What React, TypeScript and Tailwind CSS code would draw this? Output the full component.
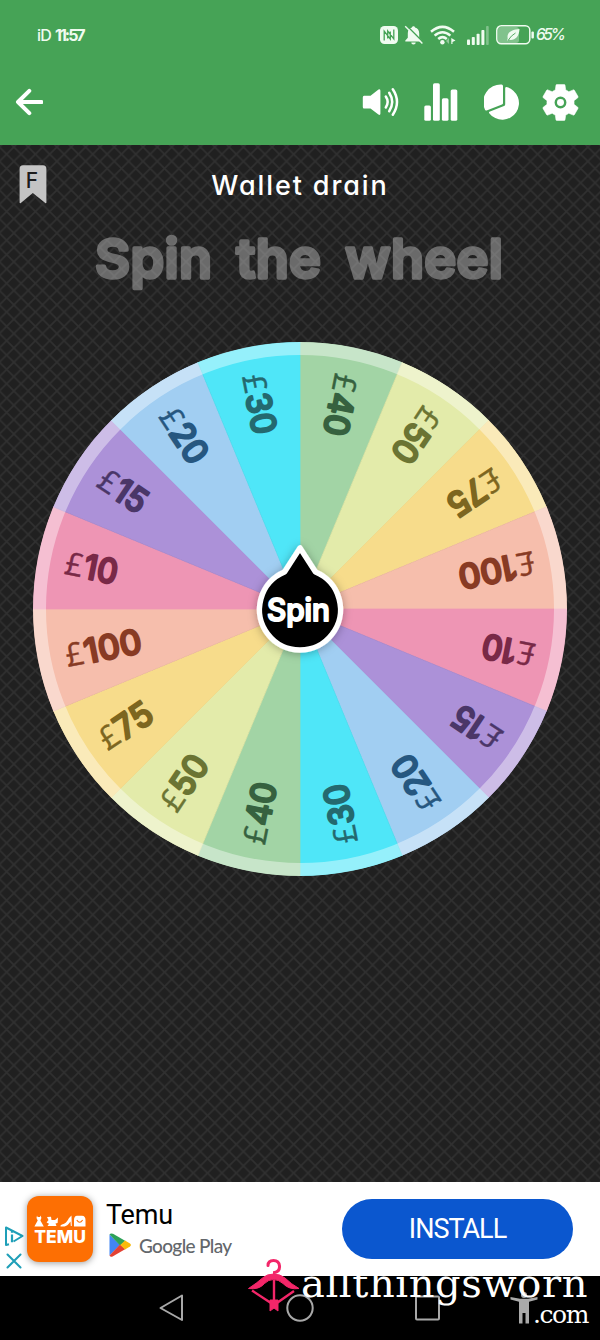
import { ReactNode } from "react"

const slices = [
  { value: "40", fill: "#a2d4a5", text: "#36613f", width: 43 },
  { value: "50", fill: "#e3ebaa", text: "#6b7433", width: 41 },
  { value: "75", fill: "#f7dc8b", text: "#7d6620", width: 39 },
  { value: "100", fill: "#f6beac", text: "#883b24", width: 58 },
  { value: "10", fill: "#ee95b4", text: "#792947", width: 34 },
  { value: "15", fill: "#ac91d8", text: "#4a3668", width: 33 },
  { value: "20", fill: "#a1cef2", text: "#265780", width: 41 },
  { value: "30", fill: "#4fe6f8", text: "#24696f", width: 41 },
]

// the same eight prizes go round twice
const wheel = [...slices, ...slices]
const STEP = 360 / wheel.length
const R = 267

function point(deg: number, r: number) {
  const a = (deg * Math.PI) / 180
  return `${(r * Math.sin(a)).toFixed(2)} ${(-r * Math.cos(a)).toFixed(2)}`
}

function Wheel() {
  return (
    <svg viewBox="-267 -267 534 534" className="block h-[534px] w-[534px]">
      <defs>
        <filter id="hub-shadow" x="-50%" y="-50%" width="200%" height="200%">
          <feDropShadow dx="0" dy="1" stdDeviation="5" floodColor="#000" floodOpacity="0.3" />
        </filter>
        <clipPath id="disc">
          <circle r={R} />
        </clipPath>
      </defs>
      <g clipPath="url(#disc)">
        {wheel.map((s, i) => (
          <path
            key={i}
            d={`M0 0L${point(i * STEP, R)}A${R} ${R} 0 0 1 ${point((i + 1) * STEP, R)}Z`}
            fill={s.fill}
            stroke={s.fill}
            strokeWidth="0.7"
          />
        ))}
      </g>
      {/* lighter rim */}
      <circle r="260.5" fill="none" stroke="#fff" strokeOpacity="0.4" strokeWidth="13" />
      {wheel.map((s, i) => (
        <g key={i} transform={`rotate(${(i + 0.5) * STEP + 90})`} fill={s.text}>
          <text
            x="-239"
            y="11.5"
            fontSize="32"
            textLength="18"
            lengthAdjust="spacingAndGlyphs"
            stroke={s.text}
            strokeWidth="0.4"
            className="font-['Open_Sans',sans-serif]"
          >
            £
          </text>
          <text
            x="-220"
            y="12"
            fontSize="34"
            textLength={s.width}
            lengthAdjust="spacingAndGlyphs"
            stroke={s.text}
            strokeWidth="2.2"
            strokeLinejoin="round"
            className="font-['Inter',sans-serif] font-medium"
          >
            {s.value}
          </text>
        </g>
      ))}
      <path
        d="M0 -61L-15.5 -37A40.5 40.5 0 1 0 15.5 -37Z"
        fill="#000"
        stroke="#fff"
        strokeWidth="5.5"
        strokeLinejoin="round"
        filter="url(#hub-shadow)"
      />
      <text
        x="-33"
        y="11.5"
        fontSize="31"
        textLength="63"
        lengthAdjust="spacingAndGlyphs"
        fill="#fff"
        stroke="#fff"
        strokeWidth="2"
        strokeLinejoin="round"
        className="font-['Inter',sans-serif] font-medium"
      >
        Spin
      </text>
    </svg>
  )
}

function Pattern() {
  return (
    <svg className="absolute inset-0 h-full w-full">
      <defs>
        <pattern id="mesh" width="14.35" height="14.35" patternUnits="userSpaceOnUse" x="-0.5" y="2">
          <path
            d="M-2 -2L16.35 16.35M16.35 -2L-2 16.35"
            stroke="#303030"
            strokeWidth="1.6"
          />
        </pattern>
      </defs>
      <rect width="100%" height="100%" fill="#202020" />
      <rect width="100%" height="100%" fill="url(#mesh)" />
    </svg>
  )
}

function StatusBar() {
  return (
    <div className="flex h-[69px] items-center justify-between pr-9 pl-[37px] text-[#f0fbf0]">
      <div className="flex gap-1 font-['Inter',sans-serif] text-[16px] leading-5 font-medium tracking-[-0.8px]">
        <span>iD</span>
        <span className="font-bold tracking-[-2px]">11:57</span>
      </div>
      <div className="flex items-center">
        <svg viewBox="0 0 18 18" className="h-[18px] w-[18px]">
          <rect width="18" height="18" rx="4.5" fill="currentColor" />
          <path d="M4.2 14.5V5.2L10.3 13V5.5M13.8 3.5v9.3L7.7 5v7.5" fill="none" stroke="#46a356" strokeWidth="1.3" />
        </svg>
        <svg viewBox="0 0 20 20" className="ml-[6px] h-5 w-5">
          <path
            d="M9.5 1.2c.9 0 1.5.6 1.5 1.4 2.7.7 4.2 3 4.2 5.6v4.6l2.6 2.7v1H1.3v-1l2.5-2.7V8.2c0-2.6 1.5-4.9 4.2-5.6 0-.8.6-1.4 1.5-1.4zM7.3 17.4h4.4c0 1.2-.9 2-2.2 2s-2.2-.8-2.2-2z"
            fill="currentColor"
          />
          <path d="M2.8 .8L19.6 17.6" stroke="#46a356" strokeWidth="1.5" />
          <path d="M1.2 1.2L18.4 18.4" stroke="currentColor" strokeWidth="1.4" />
        </svg>
        <svg viewBox="0 0 26 20" className="ml-[6px] h-5 w-[26px]">
          <g fill="none" stroke="currentColor" strokeWidth="2.5">
            <path d="M1 6.8Q12.5 -3 24 6.8" />
            <path d="M4.6 10.6Q12.5 3.8 20.4 10.6" />
            <path d="M8.2 14Q12.5 10.2 16.8 14" />
          </g>
          <circle cx="12.4" cy="17.3" r="2.2" fill="currentColor" />
          <path d="M19 13v6l-3-3z" fill="currentColor" opacity=".45" />
          <path d="M21.3 13v6h1.2v-2l3-1.5z" fill="currentColor" />
        </svg>
        <svg viewBox="0 0 23 20" className="ml-[10px] h-5 w-[23px]" fill="currentColor">
          <rect x="1" y="14.5" width="3" height="5.5" rx=".8" />
          <rect x="5.8" y="12" width="3" height="8" rx=".8" />
          <rect x="10.6" y="8.7" width="3" height="11.3" rx=".8" />
          <rect x="15.4" y="5" width="3" height="15" rx=".8" />
          <rect x="20.1" y="1" width="2.6" height="19" rx=".8" opacity=".35" />
        </svg>
        <svg viewBox="0 0 39 20" className="ml-[7px] h-5 w-[39px]">
          <rect x="2" y="2" width="21" height="16" rx="3" fill="currentColor" opacity=".35" />
          <rect x=".8" y=".8" width="33" height="18" rx="4.5" fill="none" stroke="currentColor" strokeWidth="1.5" />
          <rect x="35.4" y="6.5" width="2.5" height="7" rx="1" fill="currentColor" />
          <path d="M23.5 4C15 4.5 10.5 8 11.7 13.5L11 16l1.8-1.2C19 15.7 23 12 23.5 4z" fill="currentColor" />
          <path d="M12 15.5Q15 10.5 19.5 8" fill="none" stroke="#46a356" strokeWidth=".9" />
        </svg>
        <span className="ml-px w-7 font-['Inter',sans-serif] text-[15.5px] leading-5 font-medium tracking-[-2.4px] italic">65%</span>
      </div>
    </div>
  )
}

function Toolbar() {
  return (
    <div className="flex h-[66px] items-center justify-between pr-[21px] pl-[15px] text-white">
      <svg viewBox="0 0 28 28" className="h-7 w-7" fill="none" stroke="currentColor" strokeWidth="4" strokeLinecap="round" strokeLinejoin="round">
        <path d="M14.3 2.8L3 14L14.3 25.2M3 14H26.5" />
      </svg>
      <div className="flex items-center">
        <svg viewBox="0 0 37 30" className="h-[30px] w-[37px]">
          <path d="M2 8.8h6.5L16.5 2.6Q18.4 1.5 18.4 3.8v22.8q0 2.2-2 1L8.5 21.5H2Q.8 21.5.8 20V10.4Q.8 8.8 2 8.8z" fill="currentColor" />
          <g fill="none" stroke="currentColor" strokeWidth="2.5" strokeLinecap="round">
            <path d="M23.8 9.5Q27.5 15 23.8 20.5" />
            <path d="M27.2 5.8Q33.2 15 27.2 24.2" />
            <path d="M30.8 2.3Q39.2 15 30.8 27.7" />
          </g>
        </svg>
        <svg viewBox="0 0 34 38" className="ml-[25px] h-[38px] w-[34px]" fill="currentColor">
          <rect x=".3" y="22.5" width="6.6" height="15.3" rx="1.6" />
          <rect x="9" y="0.3" width="6.8" height="37.5" rx="1.6" />
          <rect x="17.9" y="15.3" width="6.6" height="22.5" rx="1.6" />
          <rect x="26.7" y="6.5" width="6.6" height="31.3" rx="1.6" />
        </svg>
        <svg viewBox="0 0 36 36" className="ml-[26px] h-9 w-9" fill="currentColor">
          <path d="M17.6 .5Q19 .5 19 2V19.2Q19 20 18 20.5L2.6 26.4Q1.2 26.8 .8 25.2A17.5 17.5 0 0 1 17.6 .5z" />
          <path d="M22.4 3Q21.2 3 21.2 4.2V20.2Q21.2 21.6 20 22.1L5.4 27.8Q4.6 28.4 5.2 29.2A16.6 16.6 0 1 0 22.4 3z" />
        </svg>
        <svg viewBox="2.2 2.2 19.6 19.6" className="ml-[22px] h-[37px] w-[37px]">
          <path
            fill="currentColor"
            stroke="currentColor"
            strokeWidth=".3"
            d="M19.14 12.94c.04-.3.06-.61.06-.94 0-.32-.02-.64-.07-.94l2.03-1.58c.18-.14.23-.41.12-.61l-1.92-3.32c-.12-.22-.37-.29-.59-.22l-2.39.96c-.5-.38-1.03-.7-1.62-.94l-.36-2.54c-.04-.24-.24-.41-.48-.41h-3.84c-.24 0-.43.17-.47.41l-.36 2.54c-.59.24-1.13.57-1.62.94l-2.39-.96c-.22-.08-.47 0-.59.22L2.74 8.87c-.12.21-.08.47.12.61l2.03 1.58c-.05.3-.09.63-.09.94s.02.64.07.94l-2.03 1.58c-.18.14-.23.41-.12.61l1.92 3.32c.12.22.37.29.59.22l2.39-.96c.5.38 1.03.7 1.62.94l.36 2.54c.05.24.24.41.48.41h3.84c.24 0 .44-.17.47-.41l.36-2.54c.59-.24 1.13-.56 1.62-.94l2.39.96c.22.08.47 0 .59-.22l1.92-3.32c.12-.22.07-.47-.12-.61l-2.01-1.58z"
          />
          <circle cx="12" cy="12" r="2.5" fill="none" stroke="#46a356" strokeWidth="1.3" />
        </svg>
      </div>
    </div>
  )
}

function Bookmark({ children }: { children: ReactNode }) {
  return (
    <div className="grid h-[39px] w-7">
      <svg viewBox="0 0 28 39" className="col-start-1 row-start-1 h-[39px] w-7">
        <path d="M4 .3H24Q27.4 .3 27.4 4V37.5Q27.4 38.8 26.3 38L13.8 28 1.8 38Q.6 38.8.6 37.5V4Q.6 .3 4 .3z" fill="#c4c4c4" />
      </svg>
      <span className="col-start-1 row-start-1 pt-1 pr-0.5 text-center font-['Inter',sans-serif] text-[21px] leading-6 font-medium text-[#1c1c1c]">
        {children}
      </span>
    </div>
  )
}

function Ad() {
  return (
    <div className="flex h-[94px] bg-white">
      <div className="flex w-[27px] flex-col items-center gap-1 pt-[43px]">
        <svg viewBox="0 0 20 22" className="h-[22px] w-5" fill="none" stroke="#1f9fb8" strokeWidth="2" strokeLinejoin="round">
          <path d="M5 19.2L2 20V2.5L18.5 11L9.5 16.5" />
          <path d="M8 9.5V17.2M8 5.6V7.8" strokeWidth="2.2" />
        </svg>
        <svg viewBox="0 0 16 16" className="mt-0.5 h-4 w-4" stroke="#1f9fb8" strokeWidth="2.1" strokeLinecap="round">
          <path d="M1.5 1.5l13 13M14.5 1.5l-13 13" />
        </svg>
      </div>
      <div className="mt-[14px] flex h-[66px] w-[66px] flex-col items-center rounded-xl bg-[#fd6f03] pt-[19px] shadow-[0_1px_7px_rgba(0,0,0,0.4)]">
        <svg viewBox="0 0 52 12" className="h-3 w-[52px]" fill="#fff">
          <path d="M3 .5L3.6 2H6L6.7 .5 7.4 3 6.4 5.5 9.8 11.5H.4L3.7 5.5 2.5 3z" />
          <path d="M13 2L17 1.8 17.5 5H21L24 2.5 23.6 8 21.5 8.5 22.5 11H13.5L15 8.8 12.6 7.5 14.5 5z" />
          <path d="M37.5 .5L37.8 11H36.8L36.5 6.5Q33 11.4 30.5 11.4H26.5Q26 10 28 9.5 32.5 8.5 35 3z" />
          <path d="M43 .8H48Q51.5 1 51.5 5V11.5H40V5Q40 1 43 .8z" />
          <path d="M42.8 5Q45.7 9.5 48.6 5" stroke="#fd6f03" strokeWidth="1.1" fill="none" />
        </svg>
        <span className="mt-px font-['Inter',sans-serif] text-[17.5px] leading-[18px] font-extrabold text-white">TEMU</span>
      </div>
      <div className="w-[249px] pt-[17px] pl-[13px]">
        <div className="font-['Roboto',sans-serif] text-[27px] leading-8 tracking-[-0.2px] text-black">Temu</div>
        <div className="flex items-center gap-[8px] pl-[3px]">
          <svg viewBox="0 0 22 24" className="mt-px h-6 w-[22px]">
            <path d="M.5 1.5V22.5L11 12z" fill="#4285f4" />
            <path d="M.5 1.5Q1.5-.3 4 .8L16.5 8 11 12.5z" fill="#2da158" />
            <path d="M.5 22.5Q1.5 24.5 4 23.2L16.5 16 11 11.5z" fill="#e34133" />
            <path d="M16 7.6L21 10.4Q22.8 12 21 13.6L16 16.4 11.3 12z" fill="#f9ba0b" />
          </svg>
          <span className="mt-[3px] font-['Lato',sans-serif] text-[19px] leading-6 font-medium tracking-[-0.65px] text-[#63676b]">
            Google Play
          </span>
        </div>
      </div>
      <button className="mt-[17px] h-15 w-[231px] rounded-full bg-[#0b57cf] font-['Roboto',sans-serif] text-[27px] tracking-[-1px] text-white">
        INSTALL
      </button>
    </div>
  )
}

function NavBar() {
  return (
    <div className="flex h-16 items-center bg-black pl-[159px]">
      <svg viewBox="0 0 26 28" className="h-7 w-[26px]" fill="none" stroke="#a8a8a8" strokeWidth="2" strokeLinejoin="round">
        <path d="M23 1.5V26L1.5 14z" />
      </svg>
      <svg viewBox="0 0 28 28" className="ml-[101px] h-7 w-7" fill="none" stroke="#a8a8a8" strokeWidth="2">
        <circle cx="14" cy="14" r="12.7" />
      </svg>
      <svg viewBox="0 0 26 26" className="ml-[100px] h-[26px] w-[26px]" fill="none" stroke="#a8a8a8" strokeWidth="2">
        <rect x="2" y="1.5" width="23" height="23" rx="1" />
      </svg>
      <svg viewBox="0 0 28 32" className="ml-[70px] h-8 w-7" fill="#aaa">
        <circle cx="14" cy="3" r="3" />
        <path d="M.5 5L10 6.8H18L27.5 5V7.6L19 9.8V31.5H15.5V21H12.5V31.5H9V9.8L.5 7.6z" />
      </svg>
    </div>
  )
}

function Watermark() {
  return (
    <div className="absolute top-[1257px] right-[12px] flex items-start">
      <svg viewBox="0 0 54 56" className="h-14 w-[54px]" fill="none" stroke="#f32669" strokeWidth="3">
        <path d="M21 8.5Q21 3.5 26.5 3.5T32.5 9 27.5 15.5V19" strokeLinecap="round" />
        <path d="M1.5 31.5Q10 26 15.5 21 20 17 26.5 17T38 21Q44 27 52 31.5 42 33 36 26.5 31.5 22.5 26.5 22.5T17.5 26.5Q12 33 1.5 31.5z" fill="#f32669" strokeWidth="1" />
        <path d="M5 33.5L27 48 47 34M27 23V47" strokeWidth="2.4" />
        <path d="M23 43H31V54L27 51 23 54z" fill="#f32669" strokeWidth="1" />
      </svg>
      <div className="flex w-[287px] flex-col items-end font-['DejaVu_Serif',serif] text-white">
        <span className="mt-1 text-[40px] leading-[44px] tracking-[0.6px] whitespace-nowrap">allthingsworn</span>
        <span className="-mt-[5px] text-[25px] leading-[30px] tracking-[-1.4px]">.com</span>
      </div>
    </div>
  )
}

export default function App() {
  return (
    <div className="relative flex h-[1340px] w-[600px] flex-col overflow-hidden bg-black">
      <header className="h-[145px] bg-[#46a356]">
        <StatusBar />
        <Toolbar />
      </header>
      <main className="relative h-[1037px]">
        <Pattern />
        <div className="relative flex flex-col items-center">
          <div className="grid w-full grid-cols-[28px_1fr_28px] px-[19px] pt-5">
            <Bookmark>F</Bookmark>
            <h1 className="text-center font-['Inter',sans-serif] text-[27px] leading-[41px] font-medium tracking-[1.9px] text-white [font-feature-settings:'cv11']">
              Wallet drain
            </h1>
          </div>
          <svg viewBox="0 0 420 80" className="mt-[12px] h-20 w-[420px] opacity-40">
            <text
              x="5"
              y="60"
              fontSize="54"
              textLength="408"
              wordSpacing="10"
              fill="#d8d8d8"
              stroke="#d8d8d8"
              strokeWidth="3.4"
              strokeLinejoin="round"
              className="font-['Inter',sans-serif] font-semibold"
            >
              Spin the wheel
            </text>
          </svg>
          <div className="mt-[43.5px]">
            <Wheel />
          </div>
        </div>
      </main>
      <Ad />
      <NavBar />
      <Watermark />
    </div>
  )
}
